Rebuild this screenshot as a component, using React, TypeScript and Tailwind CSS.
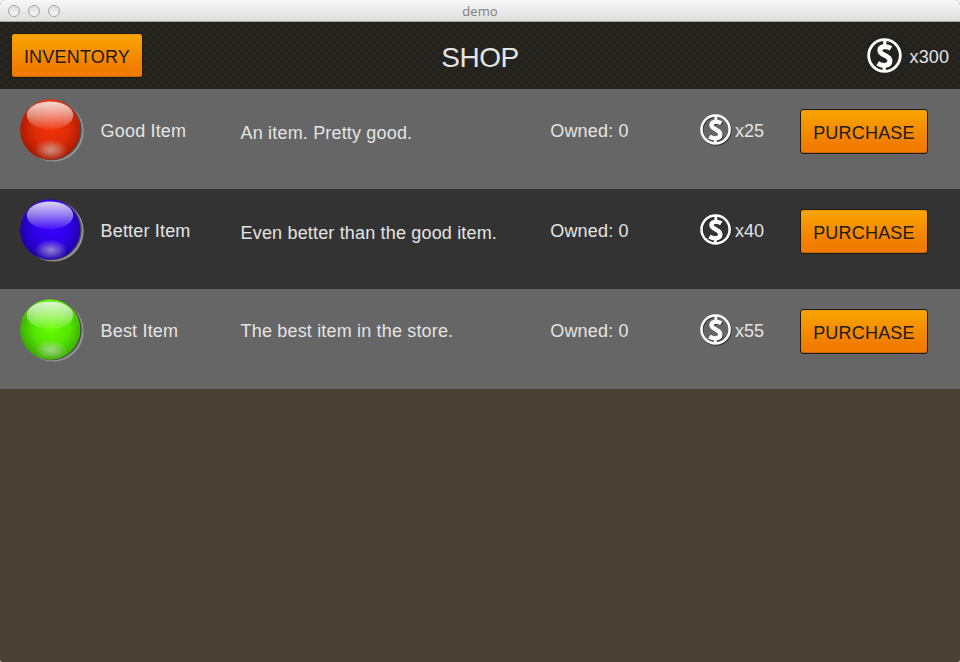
import React from 'react';

type Tone = { id: string; core: string; mid: string; edge: string };
type Item = { name: string; text: string; owned: number; price: number; tone: Tone; rowClass: string; textClass: string };

const items: Item[] = [
  { name: 'Good Item', text: 'An item. Pretty good.', owned: 0, price: 25, tone: { id: 'red', core: '#f23308', mid: '#dc2c06', edge: '#9c1400' }, rowClass: 'bg-[#666666]', textClass: 'pt-[34px]' },
  { name: 'Better Item', text: 'Even better than the good item.', owned: 0, price: 40, tone: { id: 'blue', core: '#3b00ff', mid: '#2e00e6', edge: '#1c0098' }, rowClass: 'bg-[#333333]', textClass: 'pt-[34px]' },
  { name: 'Best Item', text: 'The best item in the store.', owned: 0, price: 55, tone: { id: 'green', core: '#68ff00', mid: '#54e600', edge: '#319a00' }, rowClass: 'bg-[#666666]', textClass: 'pt-8' },
];

function Orb({ tone }: { tone: Tone }) {
  return (
    <svg viewBox="0 0 66 66" className="mt-2.5 h-[66px] w-[66px]">
      <defs>
        <radialGradient id={`${tone.id}-body`} cx="0.52" cy="0.46" r="0.6">
          <stop offset="0" stopColor={tone.core} />
          <stop offset="0.5" stopColor={tone.mid} />
          <stop offset="1" stopColor={tone.edge} />
        </radialGradient>
        <linearGradient id={`${tone.id}-top`} x1="0" y1="0" x2="0" y2="1">
          <stop offset="0" stopColor="#fff" stopOpacity="0.84" />
          <stop offset="0.5" stopColor="#fff" stopOpacity="0.48" />
          <stop offset="1" stopColor="#fff" stopOpacity="0.06" />
        </linearGradient>
        <radialGradient id={`${tone.id}-glow`}>
          <stop offset="0" stopColor="#d2d2d2" stopOpacity="0.62" />
          <stop offset="1" stopColor="#d2d2d2" stopOpacity="0" />
        </radialGradient>
        <linearGradient id={`${tone.id}-rim`} x1="0" y1="0" x2="0" y2="1">
          <stop offset="0" stopColor={tone.core} />
          <stop offset="0.4" stopColor={tone.core} stopOpacity="0" />
        </linearGradient>
      </defs>
      <circle cx="33.3" cy="32.2" r="30.4" fill="#929292" />
      <circle cx="31.6" cy="31" r="30.2" fill="#4c4c4c" />
      <circle cx="30.2" cy="30.7" r="30.1" fill={`url(#${tone.id}-body)`} />
      <circle cx="30.2" cy="30.7" r="29.4" fill="none" stroke={`url(#${tone.id}-rim)`} strokeWidth="1.5" />
      <ellipse cx="30" cy="16.4" rx="23.2" ry="14" fill={`url(#${tone.id}-top)`} />
      <ellipse cx="31" cy="51" rx="17" ry="10.5" fill={`url(#${tone.id}-glow)`} />
    </svg>
  );
}

const dollarCurve = 'M24 10.4C20.6 8.4 12.9 7.6 12.9 12.5C12.9 17.8 23 16.9 22.9 22.8C22.8 28.6 15.2 28.2 10.6 25.4';

function Coin({ className }: { className: string }) {
  return (
    <svg viewBox="0 0 36 36" className={className} fill="none">
      <g stroke="#252525" transform="translate(0.9 0.9)" opacity="0.8">
        <circle cx="17.5" cy="17.5" r="15.8" strokeWidth="2.8" />
        <path d={dollarCurve} strokeWidth="5" />
      </g>
      <g stroke="#fff">
        <circle cx="17.5" cy="17.5" r="15.8" strokeWidth="2.8" />
        <path d={dollarCurve} strokeWidth="5" />
        <path d="M17.8 2V9M17.2 27V33" strokeWidth="3.2" />
      </g>
    </svg>
  );
}

function OrangeButton({ label, className }: { label: string; className: string }) {
  return (
    <button className={`flex items-center justify-center rounded-[3px] border border-[#201a12] bg-linear-to-b from-[#f8a500] to-[#f17c00] to-80% pt-0.5 text-[18px] leading-none tracking-[0.2px] text-[#1c1a16] shadow-[inset_0_-1px_0_#c96800,inset_0_1px_0_#e69b08] ${className}`}>
      {label}
    </button>
  );
}

export default function App() {
  return (
    <div className="flex h-[662px] w-[960px] flex-col overflow-hidden rounded-t-[5px] rounded-b-[2px] bg-[#494135] font-['Liberation_Sans',Arial,sans-serif] text-[18px] leading-5 tracking-[0.17px] text-[#e4e4e4]">
      <div className="grid h-[22px] shrink-0 grid-cols-[1fr_auto_1fr] items-center border-b border-[#a4a4a4] bg-linear-to-b from-[#f8f8f8] to-[#dedede] px-2">
        <div className="flex gap-2">
          {[0, 1, 2].map((n) => (
            <span key={n} className="h-3 w-3 rounded-full border border-[#a2a2a2] bg-linear-to-b from-[#dedede] to-[#f7f7f7]" />
          ))}
        </div>
        <span className="font-['Open_Sans',sans-serif] text-[13px] leading-5 tracking-[0.1px] text-[#7c7c7c]">demo</span>
      </div>

      <div className="grid h-[67px] shrink-0 grid-cols-[1fr_auto_1fr] items-center bg-[repeating-linear-gradient(135deg,#22211d_0px,#22211d_3px,#272520_3px,#272520_5.66px)] px-[11px]">
        <OrangeButton label="INVENTORY" className="h-[45px] w-[132px]" />
        <h1 className="pt-1 text-[28px] leading-8 tracking-[-0.5px]">SHOP</h1>
        <div className="flex items-center justify-end">
          <Coin className="mr-[7px] h-9 w-9" />
          <span className="pt-0.5 tracking-[0.1px]">x300</span>
        </div>
      </div>

      {items.map((item) => (
        <div key={item.name} className={`grid h-[100px] shrink-0 grid-cols-[80.6px_140px_309.7px_149.7px_100px_128px] items-start pl-5 ${item.rowClass}`}>
          <Orb tone={item.tone} />
          <span className="pt-8">{item.name}</span>
          <span className={`whitespace-nowrap ${item.textClass}`}>{item.text}</span>
          <span className="pt-8">Owned: {item.owned}</span>
          <div className="flex items-start">
            <Coin className="mt-[25px] h-8 w-8" />
            <span className="ml-[3px] pt-8 tracking-normal">x{item.price}</span>
          </div>
          <OrangeButton label="PURCHASE" className="mt-5 h-[45px] w-32" />
        </div>
      ))}
    </div>
  );
}
